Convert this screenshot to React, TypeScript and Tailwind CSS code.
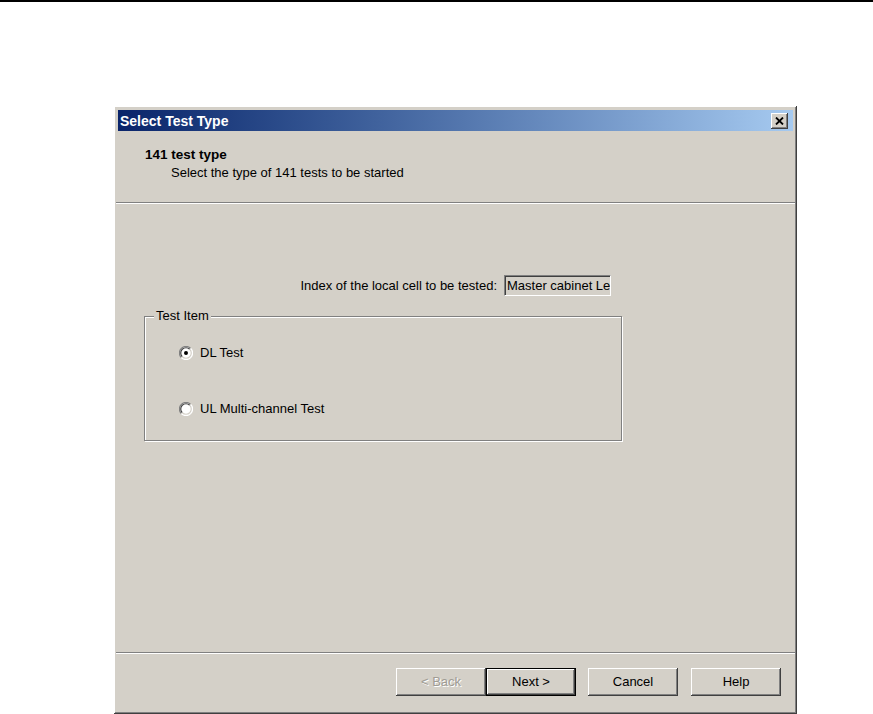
import React from 'react';

const raised =
  'shadow-[inset_-1px_-1px_#404040,inset_1px_1px_#ffffff,inset_-2px_-2px_#808080,inset_2px_2px_#d4d0c8]';

const Radio: React.FC<{ checked?: boolean }> = ({ checked }) => (
  <svg width="14" height="14" viewBox="0 0 12 12" className="shrink-0">
    <circle cx="6" cy="6" r="5.5" fill="#ffffff" />
    <path d="M10 2 A5.5 5.5 0 0 0 2 10" stroke="#808080" strokeWidth="1" fill="none" />
    <path d="M9.2 2.8 A4.5 4.5 0 0 0 2.8 9.2" stroke="#404040" strokeWidth="1" fill="none" />
    <path d="M2 10 A5.5 5.5 0 0 0 10 2" stroke="#ffffff" strokeWidth="1" fill="none" />
    <path d="M2.8 9.2 A4.5 4.5 0 0 0 9.2 2.8" stroke="#d4d0c8" strokeWidth="1" fill="none" />
    {checked && <circle cx="6" cy="6" r="1.7" fill="#000000" />}
  </svg>
);

const Button: React.FC<{ label: string; disabled?: boolean; isDefault?: boolean; className?: string }> = ({
  label,
  disabled,
  isDefault,
  className = '',
}) => (
  <button
    className={`h-[28px] w-[90px] bg-[#d4d0c8] text-[13px] ${
      isDefault
        ? 'border border-black shadow-[inset_-1px_-1px_#404040,inset_1px_1px_#ffffff,inset_-2px_-2px_#808080]'
        : raised
    } ${disabled ? 'text-[#a09c94] [text-shadow:1px_1px_#ffffff]' : 'text-black'} ${className}`}
  >
    {label}
  </button>
);

export default function App() {
  return (
    <div className="min-h-[714px] bg-white font-['Liberation_Sans',Arial,sans-serif] overflow-hidden">
      <div className="h-[2px] bg-black" />
      <div className="pt-[104px] pl-[114px]">
        <div className={`w-[683px] h-[608px] bg-[#d4d0c8] p-[4px] flex flex-col ${raised}`}>
          {/* title bar */}
          <div className="h-[21px] flex items-center justify-between pl-[2px] pr-[5px] bg-gradient-to-r from-[#0a246a] to-[#a6caf0]">
            <span className="text-white font-bold text-[14px] leading-none">Select Test Type</span>
            <div className={`w-[17px] h-[16px] bg-[#d4d0c8] flex items-center justify-center ${raised}`}>
              <svg width="9" height="8" viewBox="0 0 9 8">
                <path d="M1 0.5 L8 7.5 M8 0.5 L1 7.5" stroke="#000" strokeWidth="1.8" />
              </svg>
            </div>
          </div>

          {/* header */}
          <div className="h-[71px] pl-[27px] pt-[15px] text-black">
            <div className="font-bold text-[13.5px] leading-[17px]">141 test type</div>
            <div className="pl-[26px] text-[13px] leading-[17px] mt-[1px]">
              Select the type of 141 tests to be started
            </div>
          </div>
          <div className="h-[1px] bg-[#808080] -mx-[2px]" />
          <div className="h-[1px] bg-white -mx-[2px]" />

          {/* body */}
          <div className="flex-1 flex flex-col">
            <div className="mt-[71px] w-[493px] flex justify-end items-center gap-[7px]">
              <span className="text-[13px] text-black">Index of the local cell to be tested:</span>
              <div className="w-[107px] h-[21px] border-t border-l border-[#808080] border-b border-r border-b-white border-r-white shadow-[inset_1px_1px_#404040,inset_-1px_-1px_#d4d0c8] overflow-hidden flex items-center pl-[2px]">
                <span className="text-[13px] text-black whitespace-nowrap">Master cabinet Le</span>
              </div>
            </div>

            <div className="relative mt-[20px] ml-[26px] w-[478px] h-[125px] border border-[#808080] shadow-[1px_1px_#ffffff,inset_1px_1px_#ffffff]">
              <span className="absolute -top-[9px] left-[9px] px-[2px] bg-[#d4d0c8] text-[13px] leading-[16px] text-black">
                Test Item
              </span>
              <div className="pl-[34px] pt-[29px] flex flex-col gap-[42px]">
                <label className="flex items-center gap-[7px] text-[13px] text-black h-[14px]">
                  <Radio checked />
                  DL Test
                </label>
                <label className="flex items-center gap-[7px] text-[13px] text-black h-[14px]">
                  <Radio />
                  UL Multi-channel Test
                </label>
              </div>
            </div>
          </div>

          {/* footer */}
          <div className="h-[1px] bg-[#808080] -mx-[2px]" />
          <div className="h-[1px] bg-white -mx-[2px]" />
          <div className="h-[56px] flex items-start justify-end pr-[12px] pt-[14px]">
            <Button label="< Back" disabled />
            <Button label="Next >" isDefault />
            <Button label="Cancel" className="ml-[12px]" />
            <Button label="Help" className="ml-[13px]" />
          </div>
        </div>
      </div>
    </div>
  );
}
